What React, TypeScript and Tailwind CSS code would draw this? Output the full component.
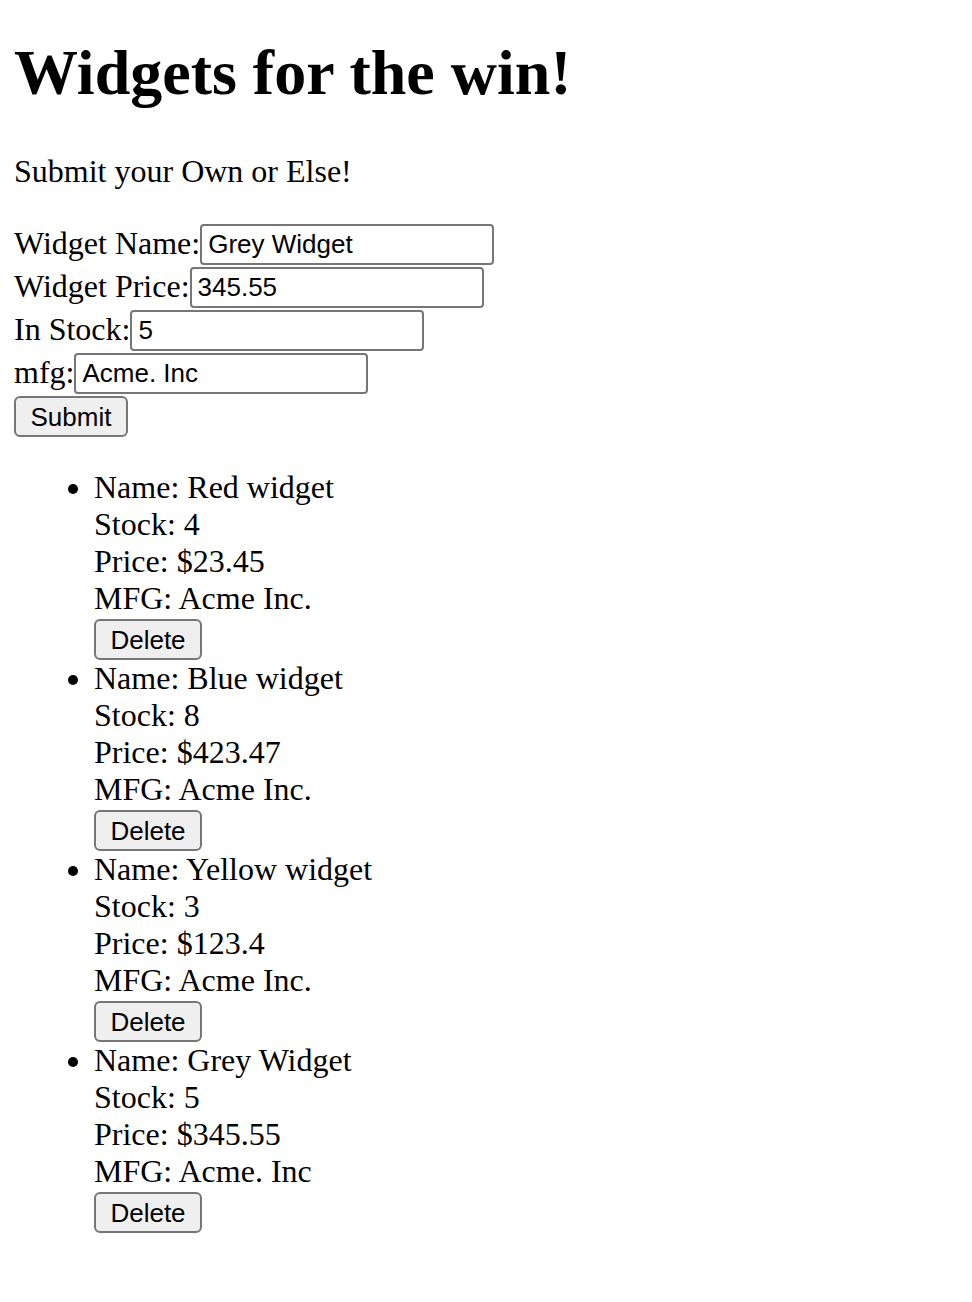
import React from "react";

const items = [
  { name: "Red widget", stock: "4", price: "$23.45", mfg: "Acme Inc." },
  { name: "Blue widget", stock: "8", price: "$423.47", mfg: "Acme Inc." },
  { name: "Yellow widget", stock: "3", price: "$123.4", mfg: "Acme Inc." },
  { name: "Grey Widget", stock: "5", price: "$345.55", mfg: "Acme. Inc" },
];

const fields = [
  { label: "Widget Name:", value: "Grey Widget" },
  { label: "Widget Price:", value: "345.55" },
  { label: "In Stock:", value: "5" },
  { label: "mfg:", value: "Acme. Inc" },
];

function Btn({ children, w }: { children: React.ReactNode; w: string }) {
  return (
    <button
      type="button"
      className={`${w} h-[41px] rounded-[6px] border-2 border-[#767676] bg-[#efefef] font-['Liberation_Sans',Arial,sans-serif] text-[26px] leading-none text-black`}
    >
      {children}
    </button>
  );
}

export default function App() {
  return (
    <div className="bg-white px-[14px] pt-[36px] pb-[60px] font-['Liberation_Serif','Times_New_Roman',serif] text-[32px] leading-[37px] text-black">
      <h1 className="text-[64px] font-bold leading-[74px]">Widgets for the win!</h1>
      <p className="mt-[43px]">Submit your Own or Else!</p>
      <form className="mt-[32px] flex flex-col" onSubmit={(e) => e.preventDefault()}>
        {fields.map((f) => (
          <div key={f.label} className="flex h-[43px] items-center">
            <span className="leading-[37px]">{f.label}</span>
            <input
              readOnly
              value={f.value}
              className="h-[41px] w-[294px] self-end rounded-[4px] border-2 border-[#767676] bg-white px-[6px] font-['Liberation_Sans',Arial,sans-serif] text-[26px] text-black outline-none"
            />
          </div>
        ))}
        <div className="flex h-[43px] items-end">
          <Btn w="w-[114px]">Submit</Btn>
        </div>
      </form>
      <ul className="mt-[32px] list-disc pl-[80px]">
        {items.map((it) => (
          <li key={it.name}>
            <div>Name: {it.name}</div>
            <div>Stock: {it.stock}</div>
            <div>Price: {it.price}</div>
            <div>MFG: {it.mfg}</div>
            <div className="flex h-[43px] items-end">
              <Btn w="w-[108px]">Delete</Btn>
            </div>
          </li>
        ))}
      </ul>
    </div>
  );
}
